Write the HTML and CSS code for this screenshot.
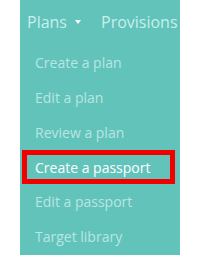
FILE: index.html
```html
<!DOCTYPE html>
<html lang="en">

<head>
    <meta charset="UTF-8">
    <meta name="viewport" content="width=device-width, initial-scale=1.0">
    <title>Plans</title>
    <link rel="stylesheet" href="styles.css">
</head>

<body>
    <div class="menu">
        <div class="menu-header">
            <a href="javascript:;" class="menu-top">Plans <span class="caret"></span></a>
            <a href="javascript:;" class="menu-top">Provisions</a>
        </div>
        <ul class="menu-list">
            <li><a href="javascript:;">Create a plan</a></li>
            <li><a href="javascript:;">Edit a plan</a></li>
            <li><a href="javascript:;">Review a plan</a></li>
            <li class="active"><a href="javascript:;">Create a passport</a></li>
            <li><a href="javascript:;">Edit a passport</a></li>
            <li><a href="javascript:;">Target library</a></li>
        </ul>
    </div>
</body>

</html>
```

FILE: styles.css
```css
body {
    margin: 0;
    background-color: #fff;
    font-family: "Open Sans", "DejaVu Sans", sans-serif;
}

.menu {
    margin-left: 20px;
    width: 160px;
    height: 255px;
    background-color: #62c3bb;
}

.menu-header {
    display: flex;
    align-items: flex-start;
    gap: 20px;
    padding: 11px 0 0 7px;
    height: 45px;
    box-sizing: border-box;
}

.menu-top {
    color: #c8efec;
    font-size: 16px;
    line-height: 22px;
    text-decoration: none;
    display: flex;
    align-items: center;
    gap: 8px;
}

.caret {
    width: 0;
    height: 0;
    border-left: 3px solid transparent;
    border-right: 3px solid transparent;
    border-top: 4px solid #fff;
}

.menu-list {
    list-style: none;
    margin: 0;
    padding: 0;
}

.menu-list li {
    height: 35px;
    display: flex;
    align-items: center;
    padding-left: 15px;
}

.menu-list a {
    color: #b9e6e2;
    font-size: 14px;
    text-decoration: none;
}

.menu-list .active {
    margin-left: 2px;
    width: 153px;
    height: 34px;
    box-sizing: border-box;
    border: 5px solid #f20000;
    padding-left: 8px;
}

.menu-list .active a {
    color: #fff;
}
```
